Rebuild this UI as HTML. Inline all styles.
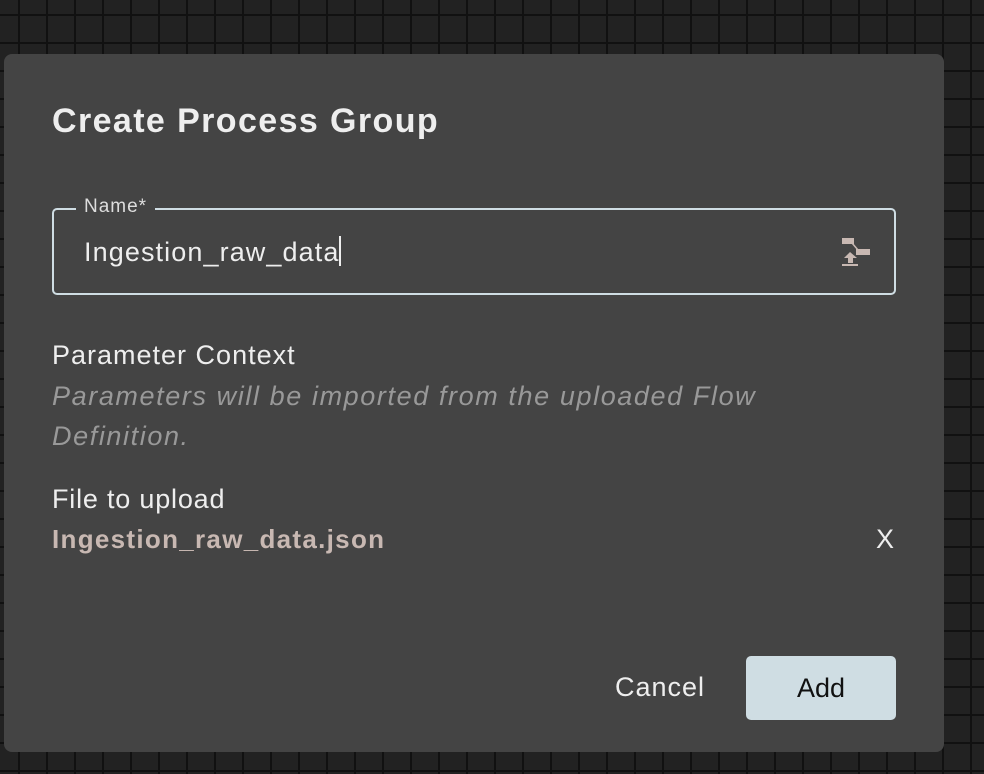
<!DOCTYPE html>
<html><head><style>
body{margin:0;width:984px;height:774px;overflow:hidden;background-color:#222;
background-image:linear-gradient(90deg,#111 2px,transparent 2px),linear-gradient(#111 2px,transparent 2px);
background-size:28px 28px;background-position:18px 14px;font-family:"Liberation Sans",sans-serif;position:relative}
.dlg{position:absolute;left:4px;top:54px;width:940px;height:698px;background:#444;border-radius:8px}
h1{position:absolute;left:48px;top:48px;margin:0;font-size:34px;font-weight:bold;color:#eee;letter-spacing:1.4px}
.field{position:absolute;left:48px;top:154px;width:844px;height:87px;border:2.5px solid #cfdde3;border-radius:5px;box-sizing:border-box}
.lbl{position:absolute;left:72px;top:142px;background:#444;padding:0 8px;font-size:19px;color:#ddd;letter-spacing:1px}
.val{position:absolute;left:80px;top:182px;font-size:27px;color:#eee;letter-spacing:1.1px}
.t{position:absolute;color:#eee;font-size:26px}
.i{position:absolute;color:#999;font-size:27px;font-style:italic;line-height:40px;letter-spacing:1.6px}
.btn{position:absolute;left:742px;top:602px;width:150px;height:64px;background:#cfdde3;border-radius:5px;color:#111;font-size:27px;text-align:center;line-height:64px}
</style></head><body>
<div class="dlg">
<h1>Create Process Group</h1>
<div class="field"></div>
<div class="lbl">Name*</div>
<div class="val">Ingestion_raw_data<span style="display:inline-block;width:2px;height:30px;background:#eee;vertical-align:-5px"></span></div>
<div class="t" style="left:48px;top:286px;font-size:27px;letter-spacing:1px">Parameter Context</div>
<div class="i" style="left:48px;top:322px">Parameters will be imported from the uploaded Flow<br>Definition.</div>
<div class="t" style="left:48px;top:430px;font-size:27px;letter-spacing:0.8px">File to upload</div>
<div class="t" style="left:48px;top:470px;color:#c8b8b2;font-weight:bold;letter-spacing:1.3px">Ingestion_raw_data.json</div>
<div class="t" style="left:872px;top:470px;font-size:27px">X</div>
<div class="t" style="left:611px;top:618px;font-size:27px;letter-spacing:1px">Cancel</div>
<div class="btn">Add</div>
</div>
<svg style="position:absolute;left:820px;top:234px" width="56" height="36" viewBox="820 234 56 36">
<rect x="842" y="238" width="12" height="6" fill="#c8b8b2"/><rect x="856" y="249" width="14" height="6" fill="#c8b8b2"/>
<line x1="852" y1="243" x2="858" y2="250" stroke="#c8b8b2" stroke-width="1.5"/>
<path d="M850 252 L844 258 L848 258 L848 263 L853 263 L853 258 L857 258 Z" fill="#c8b8b2"/>
<rect x="842" y="264" width="16" height="2" fill="#c8b8b2"/></svg>
</body></html>
